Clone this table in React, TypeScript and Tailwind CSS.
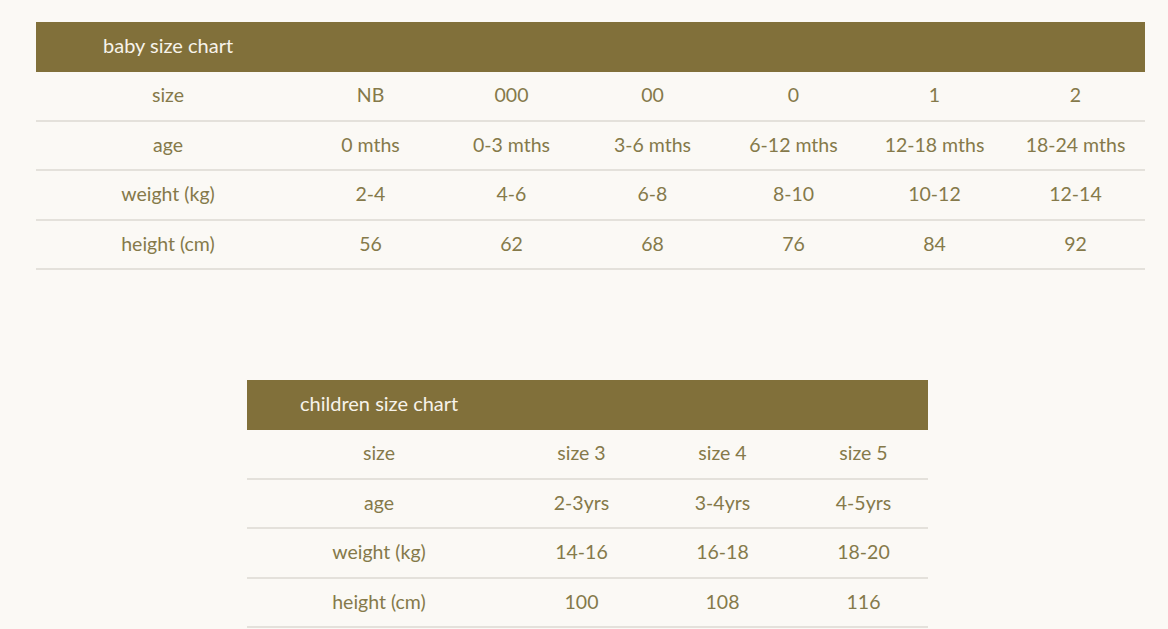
import React from 'react';

type Chart = {
    title: string
    rows: string[][]
}

const baby: Chart = {
    title: "baby size chart",
    rows: [
        ["size", "NB", "000", "00", "0", "1", "2"],
        ["age", "0 mths", "0-3 mths", "3-6 mths", "6-12 mths", "12-18 mths", "18-24 mths"],
        ["weight (kg)", "2-4", "4-6", "6-8", "8-10", "10-12", "12-14"],
        ["height (cm)", "56", "62", "68", "76", "84", "92"],
    ],
}

const children: Chart = {
    title: "children size chart",
    rows: [
        ["size", "size 3", "size 4", "size 5"],
        ["age", "2-3yrs", "3-4yrs", "4-5yrs"],
        ["weight (kg)", "14-16", "16-18", "18-20"],
        ["height (cm)", "100", "108", "116"],
    ],
}

function SizeTable({chart, titlePad}: { chart: Chart, titlePad: string }) {
    return (
        <div className="w-full">
            <div className={`h-[50px] pb-[5px] bg-[#81703a] text-[#f7f3ea] text-[20px] flex items-center ${titlePad}`}>
                {chart.title}
            </div>
            {chart.rows.map((row, i) => (
                <div key={i} className="flex h-[49.5px] pb-[2px] items-center border-b-2 border-[#e4e1db] text-[19.5px] text-[#85794a]">
                    {row.map((cell, j) => (
                        <div key={j} className={`text-center shrink-0 ${j == 0 ? "w-[264px]" : "w-[141px]"}`}>{cell}</div>
                    ))}
                </div>
            ))}
        </div>
    )
}

export default function App() {
    return (
        <div className="min-h-[629px] bg-[#fbf9f5] pt-[22px] font-['Lato','Open_Sans',sans-serif]">
            <div className="ml-[36px] w-[1109px] overflow-hidden">
                <SizeTable chart={baby} titlePad="pl-[67px]"/>
            </div>
            <div className="ml-[247px] w-[681px] mt-[110px] overflow-hidden">
                <SizeTable chart={children} titlePad="pl-[53px]"/>
            </div>
        </div>
    );
}
